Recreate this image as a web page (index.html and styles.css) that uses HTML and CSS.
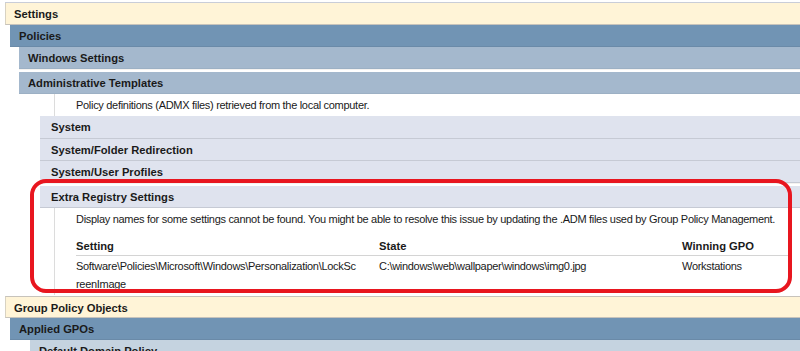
FILE: index.html
```html
<!DOCTYPE html>
<html>
<head>
<meta charset="utf-8">
<link rel="stylesheet" href="styles.css">
</head>
<body>
<div class="page">
  <div class="topline"></div>
  <div class="bar cream lvl0">Settings</div>
  <div class="lvl1">
    <div class="bar dark">Policies</div>
    <div class="lvl2">
      <div class="bar mid">Windows Settings</div>
      <div class="sep"></div>
      <div class="bar mid">Administrative Templates</div>
      <div class="content">
        <div class="note">Policy definitions (ADMX files) retrieved from the local computer.</div>
      </div>
      <div class="lvl3">
        <div class="bar light">System</div>
        <div class="bar light">System/Folder Redirection</div>
        <div class="bar light">System/User Profiles</div>
        <div class="sep small"></div>
        <div class="bar light">Extra Registry Settings</div>
        <div class="content tall">
          <div class="note">Display names for some settings cannot be found. You might be able to resolve this issue by updating the .ADM files used by Group Policy Management.</div>
          <div class="table">
            <div class="th c1">Setting</div>
            <div class="th c2">State</div>
            <div class="th c3">Winning GPO</div>
            <div class="td c1">Software\Policies\Microsoft\Windows\Personalization\LockScreenImage</div>
            <div class="td c2">C:\windows\web\wallpaper\windows\img0.jpg</div>
            <div class="td c3">Workstations</div>
          </div>
        </div>
      </div>
    </div>
  </div>
  <div class="bar cream lvl0 gpo">Group Policy Objects</div>
  <div class="lvl1">
    <div class="bar dark">Applied GPOs</div>
    <div class="lvl2b">
      <div class="bar pale">Default Domain Policy</div>
    </div>
  </div>
  <div class="highlight"></div>
</div>
</body>
</html>
```
FILE: styles.css
```css
html, body {
  margin: 0;
  padding: 0;
  background: #ffffff;
}
body {
  font-family: "Liberation Sans", Arial, sans-serif;
  font-size: 11px;
  letter-spacing: -0.3px;
  color: #1a1a1a;
  overflow: hidden;
  width: 800px;
  height: 351px;
}
.page {
  position: relative;
  padding-top: 2px;
}
.topline {
  height: 1px;
  margin-left: 5px;
  background: #c9cdd8;
}
.bar {
  height: 22px;
  line-height: 22px;
  font-weight: bold;
  font-size: 11.2px;
  letter-spacing: 0;
  padding-left: 9px;
  white-space: nowrap;
  box-sizing: border-box;
}
.lvl0 { margin-left: 5px; }
.lvl1 { margin-left: 10px; }
.lvl2 { margin-left: 9px; }
.lvl2b { margin-left: 20px; }
.lvl3 { margin-left: 21px; }
.cream {
  background: #fff4d7;
  border-left: 1px solid #d8d2c2;
  border-bottom: 1px solid #c7c3bb;
  padding-left: 8px;
}
.dark {
  background: #7194b4;
  border-bottom: 1px solid #6a8aa8;
}
.mid {
  background: #a4b8cd;
  border-bottom: 1px solid #9cb0c4;
}
.sep {
  height: 2px;
  border-top: 1px solid #f4f2f0;
}
.sep.small { height: 2px; }
.light {
  background: #dfe3ee;
  border-bottom: 1px solid #c6cad4;
  padding-left: 11px;
  height: 22px;
}
.light:first-child { height: 23px; }
.pale {
  background: #c5d3e0;
}
.content {
  margin-left: 35px;
  border-left: 1px solid #dcdcdc;
  padding-left: 21px;
  height: 22px;
}
.lvl3 .content {
  margin-left: 14px;
}
.note {
  height: 22px;
  line-height: 22px;
  white-space: nowrap;
}
.content.tall {
  height: 87px;
}
.table {
  display: grid;
  grid-template-columns: 303px 303px 1fr;
  margin-top: 8px;
  margin-right: 10px;
}
.th {
  font-weight: bold;
  font-size: 11.2px;
  letter-spacing: 0;
  border-bottom: 1px solid #d4d4d4;
  height: 17px;
  line-height: 17px;
}
.td {
  line-height: 18px;
  padding-top: 1px;
  word-break: break-all;
}
.td.c1 { padding-right: 23px; }
.gpo {
  border-top: 1px solid #c7c3bb;
  margin-top: 1px;
}
.highlight {
  position: absolute;
  left: 30px;
  top: 179px;
  width: 762px;
  height: 114px;
  box-sizing: border-box;
  border: 4px solid #e8161f;
  border-radius: 16px;
}
```
